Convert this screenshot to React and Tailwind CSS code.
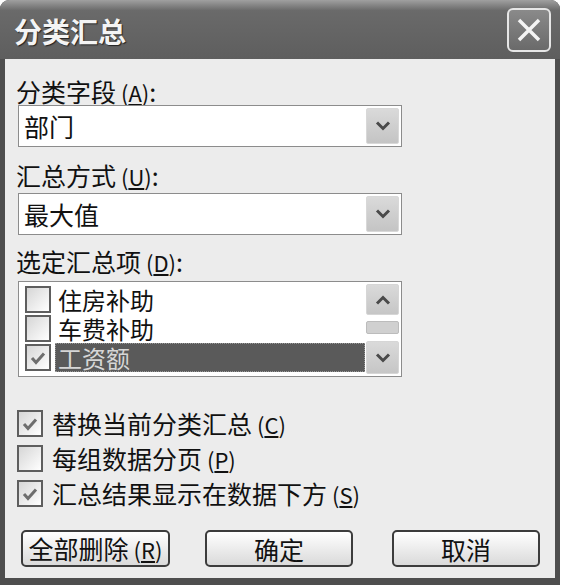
import React from 'react';

const Chevron = ({ up }) => (
  <svg width="16" height="10" viewBox="0 0 16 10">
    <path
      d={up ? 'M2 8.5 L8 2.5 L14 8.5' : 'M2 1.5 L8 7.5 L14 1.5'}
      fill="none"
      stroke="#4a4a4a"
      strokeWidth="3"
    />
  </svg>
);

const CheckBox = ({ checked }) => (
  <div className="w-[26px] h-[27px] shrink-0 border-2 border-[#5e5e5e] bg-linear-to-br from-[#d6d6d6] to-white flex items-center justify-center">
    {checked && (
      <svg width="18" height="16" viewBox="0 0 18 16">
        <path d="M3 8 L7 12.5 L15 3.5" fill="none" stroke="#6e6e6e" strokeWidth="3" />
      </svg>
    )}
  </div>
);

const Key = ({ k }) => (
  <span className="text-[22px]">
    {' ('}
    <span className="underline underline-offset-2">{k}</span>
    {')'}
  </span>
);

const Combo = ({ value }) => (
  <div className="ml-[2px] w-[384px] h-[42px] border border-[#8c8c8c] bg-white flex items-center justify-between p-[2px]">
    <span className="pl-[3px] text-[25px] leading-[28px] text-[#111]">{value}</span>
    <div className="w-[33px] h-full rounded-[2px] bg-linear-to-b from-[#dadada] to-[#c4c4c4] border border-[#d8d8d8] flex items-center justify-center">
      <Chevron />
    </div>
  </div>
);

const items = [
  { name: '住房补助', checked: false },
  { name: '车费补助', checked: false },
  { name: '工资额', checked: true, selected: true },
];

const options = [
  { label: '替换当前分类汇总', k: 'C', checked: true },
  { label: '每组数据分页', k: 'P', checked: false },
  { label: '汇总结果显示在数据下方', k: 'S', checked: true },
];

const btn =
  'h-[37px] rounded-[5px] border-2 border-[#3c3c3c] bg-linear-to-b from-white to-[#dadada] text-[25px] leading-[30px] text-[#111] flex items-center justify-center';

export default function App() {
  return (
    <div className="w-[562px] h-[585px] bg-white font-['Noto_Sans_CJK_SC',sans-serif] text-[#111]">
      <div className="w-[560px] h-[585px] flex flex-col rounded-t-[9px] overflow-hidden bg-[#4e4e4e]">
        {/* title bar */}
        <div className="h-[59px] shrink-0 bg-linear-to-b from-[#a0a0a0] via-[#6a6a6a] via-[18%] to-[#5e5e5e] flex items-center justify-between pl-[14px] pr-[9px]">
          <span className="text-[28px] leading-[32px] font-bold text-[#f4f4f4] [text-shadow:1px_1px_1px_#222] mt-[2px]">分类汇总</span>
          <div className="w-[44px] h-[44px] rounded-[6px] border-2 border-[#e6e6e6] bg-linear-to-b from-[#8a8a8a] to-[#6a6a6a] flex items-center justify-center">
            <svg width="28" height="28" viewBox="0 0 28 28">
              <path d="M4 4 L24 24 M24 4 L4 24" stroke="#f4f4f4" strokeWidth="3.5" />
            </svg>
          </div>
        </div>

        {/* body */}
        <div className="flex-1 flex px-[5px] pb-[7px]">
          <div className="flex-1 bg-[#ececec] flex flex-col pl-[11px] pt-[19px]">
            <div className="h-[27px] text-[25px] leading-[27px]">分类字段<Key k="A" />:</div>
            <Combo value="部门" />

            <div className="mt-[15px] h-[27px] text-[25px] leading-[27px]">汇总方式<Key k="U" />:</div>
            <div className="mt-[4px]">
              <Combo value="最大值" />
            </div>

            <div className="mt-[13px] h-[27px] text-[25px] leading-[27px]">选定汇总项<Key k="D" />:</div>
            <div className="mt-[6px] ml-[2px] w-[384px] h-[96px] border border-[#8c8c8c] bg-white flex p-[2px]">
              <div className="flex-1 flex flex-col pl-[4px] pt-[1px]">
                {items.map((it) => (
                  <div key={it.name} className="h-[29px] flex items-center gap-[4px]">
                    <CheckBox checked={it.checked} />
                    <span
                      className={`flex-1 h-full pl-[3px] text-[24px] leading-[29px] ${
                        it.selected ? 'bg-[#5a5a5a] text-[#d6d6d6] outline outline-1 outline-dotted outline-[#999] -outline-offset-1' : ''
                      }`}
                    >
                      {it.name}
                    </span>
                  </div>
                ))}
              </div>
              <div className="w-[34px] flex flex-col gap-[4px] pl-[1px]">
                <div className="h-[31px] rounded-[2px] bg-linear-to-b from-[#dadada] to-[#c6c6c6] border border-[#d6d6d6] flex items-center justify-center">
                  <Chevron up />
                </div>
                <div className="flex-1 flex flex-col justify-start pt-[2px]">
                  <div className="h-[13px] rounded-[2px] bg-[#d0d0d0] border border-[#bcbcbc]" />
                </div>
                <div className="h-[33px] rounded-[2px] bg-linear-to-b from-[#dadada] to-[#c6c6c6] border border-[#d6d6d6] flex items-center justify-center">
                  <Chevron />
                </div>
              </div>
            </div>

            <div className="mt-[33px] flex flex-col gap-[8px]">
              {options.map((o) => (
                <div key={o.k} className="h-[27px] flex items-center gap-[9px] pl-[1px]">
                  <CheckBox checked={o.checked} />
                  <span className="text-[25px] leading-[27px]">
                    {o.label}
                    <Key k={o.k} />
                  </span>
                </div>
              ))}
            </div>

            <div className="mt-[23px] flex pl-[5px]">
              <button className={`${btn} w-[149px]`}>
                <span>
                  全部删除<Key k="R" />
                </span>
              </button>
              <button className={`${btn} ml-[35px] w-[148px]`}>确定</button>
              <button className={`${btn} ml-[39px] w-[148px]`}>取消</button>
            </div>
          </div>
        </div>
      </div>
    </div>
  );
}
